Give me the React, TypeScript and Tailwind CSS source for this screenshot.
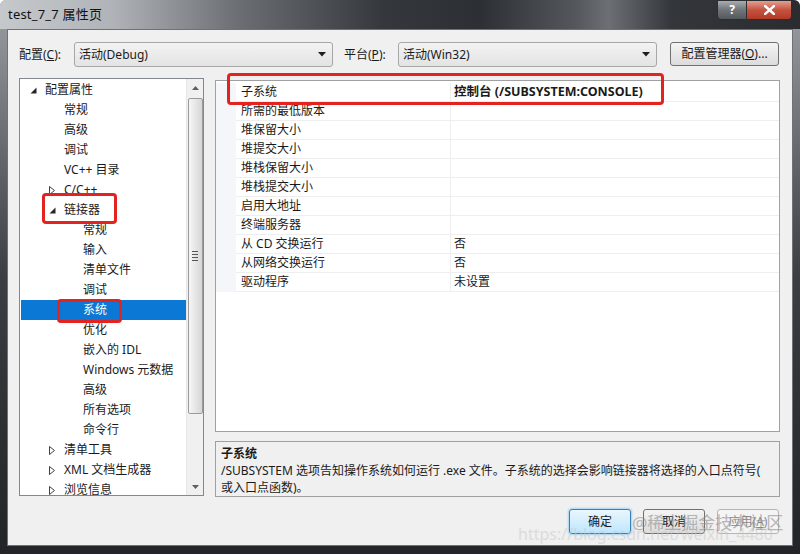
import React from 'react';

type TreeItem = {
  label: string;
  level: 0 | 1 | 2;
  arrow?: 'open' | 'closed';
  selected?: boolean;
};

const TREE: TreeItem[] = [
  { label: '配置属性', level: 0, arrow: 'open' },
  { label: '常规', level: 1 },
  { label: '高级', level: 1 },
  { label: '调试', level: 1 },
  { label: 'VC++ 目录', level: 1 },
  { label: 'C/C++', level: 1, arrow: 'closed' },
  { label: '链接器', level: 1, arrow: 'open' },
  { label: '常规', level: 2 },
  { label: '输入', level: 2 },
  { label: '清单文件', level: 2 },
  { label: '调试', level: 2 },
  { label: '系统', level: 2, selected: true },
  { label: '优化', level: 2 },
  { label: '嵌入的 IDL', level: 2 },
  { label: 'Windows 元数据', level: 2 },
  { label: '高级', level: 2 },
  { label: '所有选项', level: 2 },
  { label: '命令行', level: 2 },
  { label: '清单工具', level: 1, arrow: 'closed' },
  { label: 'XML 文档生成器', level: 1, arrow: 'closed' },
  { label: '浏览信息', level: 1, arrow: 'closed' },
];

const PROPS: { name: string; value: string; bold?: boolean }[] = [
  { name: '子系统', value: '控制台 (/SUBSYSTEM:CONSOLE)', bold: true },
  { name: '所需的最低版本', value: '' },
  { name: '堆保留大小', value: '' },
  { name: '堆提交大小', value: '' },
  { name: '堆栈保留大小', value: '' },
  { name: '堆栈提交大小', value: '' },
  { name: '启用大地址', value: '' },
  { name: '终端服务器', value: '' },
  { name: '从 CD 交换运行', value: '否' },
  { name: '从网络交换运行', value: '否' },
  { name: '驱动程序', value: '未设置' },
];

const indent = { 0: 'pl-[10px]', 1: 'pl-[29px]', 2: 'pl-[48px]' };

function Arrow({ kind }: { kind: 'open' | 'closed' }) {
  if (kind === 'open') {
    return (
      <svg width="7" height="7" viewBox="0 0 7 7" className="mt-[1px]">
        <path d="M6.5 0.5 L6.5 6.5 L0.5 6.5 Z" fill="#262626" />
      </svg>
    );
  }
  return (
    <svg width="6" height="9" viewBox="0 0 6 9">
      <path d="M0.5 0.5 L5.5 4.5 L0.5 8.5 Z" fill="#fff" stroke="#404040" strokeWidth="1" />
    </svg>
  );
}

function Combo({ text }: { text: string }) {
  return (
    <div className="w-[259px] h-[25px] rounded-[3px] border border-[#a7a7a7] bg-gradient-to-b from-[#f3f3f3] to-[#e3e3e3] flex items-center pl-[4px] pr-[6px]">
      <span className="flex-1 text-[12px] text-[#1a1a1a]">{text}</span>
      <svg width="8" height="5" viewBox="0 0 8 5">
        <path d="M0 0 L8 0 L4 4.5 Z" fill="#1f1f1f" />
      </svg>
    </div>
  );
}

function RedBox({ className }: { className: string }) {
  return <div className={`absolute border-[3px] border-[#e3231f] rounded-[4px] pointer-events-none ${className}`} />;
}

export default function App() {
  return (
    <div
      className="relative w-[800px] h-[554px] overflow-hidden flex flex-col bg-gradient-to-b from-[#9da1a5] via-[#3b3e42] to-[#222427] rounded-t-[6px]"
      style={{ fontFamily: '"Noto Sans", "Noto Sans CJK SC", sans-serif' }}
    >
      {/* title bar */}
      <div className="relative h-[29px] flex items-center pl-[8px] bg-[linear-gradient(90deg,#c6c9cc_0%,#b0b4b8_14%,#6a6e73_30%,#34373b_48%,#2c2f33_60%,#54585c_72%,#6c7074_76%,#33363a_84%,#2a2c30_100%)]">
        <span className="text-[13px] text-[#111] tracking-[0.2px]">test_7_7 属性页</span>
        <div className="absolute right-[8px] top-0 flex">
          <div className="w-[30px] h-[20px] rounded-bl-[4px] border border-[#2b2d30] bg-gradient-to-b from-[#a9adb2] via-[#6f7479] to-[#55595e] flex items-center justify-center">
            <span className="text-[12px] font-bold text-white leading-none">?</span>
          </div>
          <div className="w-[45px] h-[20px] rounded-br-[4px] border border-l-0 border-[#2b2d30] bg-gradient-to-b from-[#e0a092] via-[#c4523f] to-[#b23a27] flex items-center justify-center">
            <svg width="11" height="10" viewBox="0 0 11 10">
              <path d="M1 1 L10 9 M10 1 L1 9" stroke="#fff" strokeWidth="2.4" strokeLinecap="square" />
            </svg>
          </div>
        </div>
      </div>

      {/* client area */}
      <div className="mx-[7px] h-[517px] bg-[#f0f0f0] border border-[#6e7276] flex flex-col text-[12px] text-[#1a1a1a]">
        <div className="mt-[12px] h-[25px] flex items-center pl-[11px]">
          <span className="w-[55px]">
            配置(<span className="underline">C</span>):
          </span>
          <Combo text="活动(Debug)" />
          <span className="ml-[11px] w-[54px]">
            平台(<span className="underline">P</span>):
          </span>
          <Combo text="活动(Win32)" />
          <div className="ml-[13px] w-[109px] h-[24px] -mt-[1px] rounded-[3px] border border-[#707070] bg-gradient-to-b from-[#f4f4f4] to-[#dcdcdc] flex items-center justify-center">
            配置管理器(<span className="underline">O</span>)...
          </div>
        </div>

        <div className="mt-[11px] flex pl-[11px] gap-[11px]">
          {/* tree */}
          <div className="w-[185px] h-[418px] border border-[#828790] bg-white flex">
            <div className="flex-1 pt-[1px]">
              {TREE.map((t, i) => (
                <div
                  key={i}
                  className={`h-[20px] flex items-center ${indent[t.level]} ${t.selected ? 'bg-[#0a78d4] text-white ml-[1px]' : ''}`}
                >
                  <span className="w-[15px] flex items-center">{t.arrow && <Arrow kind={t.arrow} />}</span>
                  <span className={`whitespace-nowrap ${t.selected ? '-ml-[1px]' : ''}`}>{t.label}</span>
                </div>
              ))}
            </div>
            <div className="w-[17px] bg-[#f0f0f0] border-l border-[#e6e6e6] flex flex-col items-center">
              <div className="h-[17px] w-full flex items-center justify-center">
                <svg width="7" height="4" viewBox="0 0 7 4">
                  <path d="M0 4 L3.5 0 L7 4 Z" fill="#606060" />
                </svg>
              </div>
              <div className="w-[15px] h-[316px] mt-[2px] rounded-[2px] border border-[#9a9a9a] bg-gradient-to-r from-[#f6f6f6] via-[#e6e6e6] to-[#d6d6d6] flex items-center justify-center">
                <div className="flex flex-col gap-[2px]">
                  <div className="w-[6px] h-px bg-[#555]" />
                  <div className="w-[6px] h-px bg-[#555]" />
                  <div className="w-[6px] h-px bg-[#555]" />
                  <div className="w-[6px] h-px bg-[#555]" />
                </div>
              </div>
              <div className="flex-1" />
              <div className="h-[17px] w-full flex items-center justify-center">
                <svg width="7" height="4" viewBox="0 0 7 4">
                  <path d="M0 0 L7 0 L3.5 4 Z" fill="#606060" />
                </svg>
              </div>
            </div>
          </div>

          {/* right column */}
          <div className="w-[565px] pt-[2px] flex flex-col">
            <div className="h-[352px] border border-[#a0a0a0] bg-white flex flex-col pt-[2px]">
              {PROPS.map((p, i) => (
                <div key={i} className="h-[19px] flex">
                  <div className="w-[20px] bg-[#f4f6fa]" />
                  <div className="w-[215px] pl-[5px] flex items-center border-b border-r border-[#eeeeee] whitespace-nowrap">
                    {p.name}
                  </div>
                  <div
                    className={`flex-1 pl-[3px] flex items-center border-b border-[#eeeeee] whitespace-nowrap ${p.bold ? 'font-bold text-[12.5px]' : ''}`}
                  >
                    {p.value}
                  </div>
                </div>
              ))}
            </div>
            <div className="mt-[9px] h-[56px] border border-[#a0a0a0] bg-[#f0f0f0] pl-[5px] pt-[3px] leading-[17px] whitespace-nowrap">
              <div className="font-bold">子系统</div>
              <div>/SUBSYSTEM 选项告知操作系统如何运行 .exe 文件。子系统的选择会影响链接器将选择的入口点符号(</div>
              <div>或入口点函数)。</div>
            </div>
          </div>
        </div>

        <div className="mt-[12px] flex justify-end pr-[13px] gap-[12px]">
          <div className="w-[62px] h-[25px] rounded-[3px] border border-[#3c7fb1] bg-gradient-to-b from-[#eaf6fd] to-[#bee6fd] shadow-[0_0_2px_1px_#9fd3f5] flex items-center justify-center">
            确定
          </div>
          <div className="w-[62px] h-[25px] rounded-[3px] border border-[#707070] bg-gradient-to-b from-[#f4f4f4] to-[#dcdcdc] flex items-center justify-center">
            取消
          </div>
          <div className="w-[62px] h-[25px] rounded-[3px] border border-[#b5b5b5] bg-[#f4f4f4] text-[#8a8a8a] flex items-center justify-center">
            应用(<span className="underline">A</span>)
          </div>
        </div>
      </div>

      {/* annotation boxes */}
      <RedBox className="left-[227px] top-[73px] w-[437px] h-[32px]" />
      <RedBox className="left-[42px] top-[193px] w-[75px] h-[31px]" />
      <RedBox className="left-[57px] top-[299px] w-[65px] h-[24px]" />

      {/* watermark */}
      <div className="absolute left-[518px] top-[522px] text-[16px] text-[#c8c8c8] opacity-50 whitespace-nowrap pointer-events-none">
        https://blog.csdn.net/weixin_4480
      </div>
      <div className="absolute left-[632px] top-[510px] text-[17px] text-[#8d8d8d] opacity-60 whitespace-nowrap pointer-events-none">
        @稀土掘金技术社区
      </div>
    </div>
  );
}
